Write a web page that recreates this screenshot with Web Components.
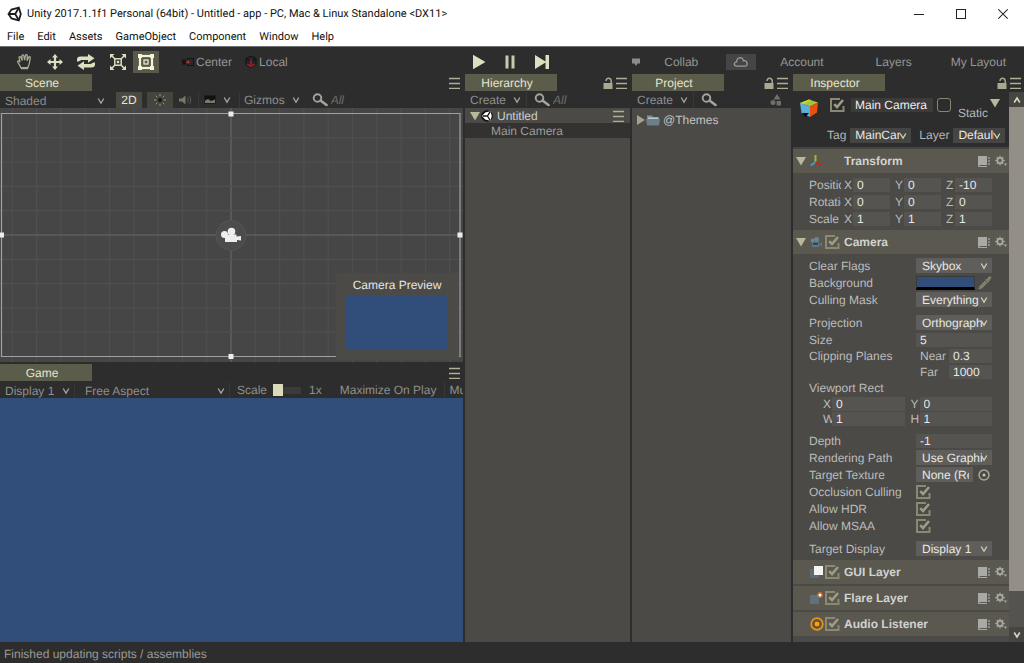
<!DOCTYPE html>
<html lang="en">
<head>
<meta charset="utf-8">
<title>Unity 2017.1.1f1 Personal (64bit) - Untitled - app</title>
<style>
  html, body { height: 100%; margin: 0; }
  body { background: #2d2d2d; font: 12px/14px "Liberation Sans", Arial, sans-serif; color: #b6b6b4; overflow: hidden; text-rendering: geometricPrecision; }
</style>
</head>
<body>
<unity-editor></unity-editor>
<script>
const RESET = `
  * { box-sizing: border-box; }
  button, input, select { font: inherit; color: inherit; margin: 0; padding: 0; border: 0; background: none; border-radius: 0; outline: 0; min-width: 0; text-rendering: inherit; }
  select { appearance: none; }
  input[type=checkbox] { appearance: none; }
  a { color: inherit; text-decoration: none; }
`;

const svg = (w, h, body) => `<svg width="${w}" height="${h}" viewBox="0 0 ${w} ${h}" aria-hidden="true">${body}</svg>`;
const ICONS = {
  unity: svg(16, 16, `<g fill="none" stroke="#1c1c1c" stroke-width="1.8"><path d="M1.5 8 4.5 3.6 11.8 1.6 13.8 8 11.8 14.4 4.5 12.4Z"/><path d="M1.5 8H8.2L11.8 1.8M8.2 8l3.6 6.2"/></g>`),
  unityball: svg(12, 14, `<circle cx="6" cy="7" r="5.8" fill="#111"/><path d="M1 7 4.2 3.4 9.4 2.2 10.8 7 9.4 11.8 4.2 10.6Z" fill="#fff"/><path d="M2 7h4.4l2.8-4.4M6.4 7l2.8 4.4" stroke="#111" stroke-width="1.3" fill="none"/>`),
  min: svg(10, 12, `<path d="M0 6.500H10" stroke="#222"/>`),
  max: svg(10, 12, `<rect x=".5" y="1.500" width="9" height="9" fill="none" stroke="#222"/>`),
  close: svg(10, 12, `<path d="M.3 1.300 9.700 10.700M9.700 1.300.3 10.700" stroke="#222" stroke-width="1.100"/>`),
  hand: svg(18, 18, `<path d="M4.600 14.500C4.300 12.500 2 10.600 1.600 8.600c.6-1 1.600-.6 2.400.6L3 4.800c0-1.300 1.500-1.500 1.900-.3l1.300 3L5.900 3c0-1.400 1.800-1.400 2 0l.7 4.200L9.400 2.600c.2-1.300 1.900-1.100 1.900.2l-.2 4.900 1.500-3.400c.5-1.200 2-.7 1.700.5-.6 2.400-.5 4.100-1.200 6.600-.4 1.300-1 1.800-1.100 3.200Z" fill="none" stroke="#a9a890" stroke-width="1.300"/><path d="M5 15.500h7" stroke="#a9a890" stroke-width="1.500"/>`),
  move: svg(16, 16, `<path d="M8 0l3 3.500H9.100V6.900h3.400V5L16 8l-3.500 3V9.100H9.100v3.400H11L8 16l-3-3.500h1.900V9.100H3.500V11L0 8l3.500-3v1.900h3.400V3.500H5Z" fill="#dedec0"/>`),
  rotate: svg(20, 16, `<path d="M1 7.500V5.500Q1 2.500 4.500 2.500H12V0L18.500 4.300 12 8.700V6H5.500L2.500 7.500ZM19 8.500v2q0 3-3.500 3H8V16L1.500 11.700 8 7.300V10h6.500l3-1.500Z" fill="#dedec0"/>`),
  scale: svg(18, 18, `<g fill="none" stroke="#dedec0" stroke-width="1.500"><rect x="5.800" y="5.800" width="6.400" height="6.400"/><path d="M5.500 5.500 2 2M12.500 5.500 16 2M5.500 12.500 2 16M12.500 12.500 16 16"/></g><path d="M1 1h4.500L1 5.500ZM17 1v4.500L12.500 1ZM1 17v-4.500L5.500 17ZM17 17h-4.500L17 12.500ZM7.800 7.800h2.400v2.400H7.800Z" fill="#dedec0"/>`),
  rect: svg(18, 18, `<rect x="3" y="3" width="12" height="12" fill="none" stroke="#f4f4d6" stroke-width="2.200"/><path d="M1 1h4v4H1ZM13 1h4v4h-4ZM1 13h4v4H1ZM13 13h4v4h-4Z" fill="#f4f4d6"/><rect x="7" y="7" width="4" height="4" fill="none" stroke="#f4f4d6" stroke-width="1.200"/>`),
  pivot: svg(12, 10, `<path d="M0 2.500h4v5H0Z" fill="#161616"/><rect x="5.500" y="1.500" width="6" height="7" fill="#2a2a2a" stroke="#141414"/><circle cx="6" cy="5" r="1.600" fill="#c8252d"/>`),
  local: svg(12, 14, `<path d="M6 1 11 3.500v6L6 12.500 1 9.500v-6ZM1 3.500 6 6l5-2.500" fill="#242424" stroke="#111"/><path d="M6 5v5M2 9l4 2.500L10 9" stroke="#b3222c" stroke-width="1.300" fill="none"/>`),
  play: svg(14, 16, `<path d="M1 0.800 13.500 8 1 15.200Z" fill="#dedec0"/>`),
  pause: svg(12, 14, `<path d="M1.500.5h3v13h-3ZM7.500.5h3v13h-3Z" fill="#c9c9ac"/>`),
  step: svg(16, 16, `<path d="M1 1 11.500 7.500V1H15v14h-3.500V8.500L1 15Z" fill="#dedec0"/>`),
  bubble: svg(8, 8, `<path d="M0 .5h8v5H5.500L4 8 2.500 5.500H0Z" fill="#8c8c8c"/>`),
  cloud: svg(16, 12, `<path d="M3.800 10.200C.6 10.200.4 6 3.700 5.900 3.400 1 9.800.2 10.400 4.800c4-.8 5.300 5.400 1.600 5.400Z" fill="none" stroke="#9a9a98" stroke-width="1.300"/>`),
  menu: svg(11, 12, `<path d="M0 1.500h11M0 6.500h11M0 11.500h11" stroke="#b0af95" stroke-width="1.400"/>`),
  lock: svg(10, 12, `<path d="M3 4C2.800.4 8.200.2 8.200 4V6.500" fill="none" stroke="#a9a890" stroke-width="1.500"/><rect x=".5" y="6" width="9" height="6" fill="#a9a890"/>`),
  chevron: svg(8, 8, `<path d="M1.200 1.500 4 6.200 6.800 1.500" fill="none" stroke="currentColor" stroke-width="1.300"/>`),
  chevup: svg(8, 8, `<path d="M1.200 6.500 4 2 6.800 6.500" fill="none" stroke="#d9d8bd" stroke-width="1.600"/>`),
  chevdown: svg(8, 8, `<path d="M1.200 1.500 4 6 6.800 1.500" fill="none" stroke="#d9d8bd" stroke-width="1.600"/>`),
  sun: svg(12, 12, `<circle cx="6" cy="6" r="1.900" fill="#151515"/><path d="M6 0v2.200M6 9.800V12M0 6h2.200M9.800 6H12M1.800 1.800l1.500 1.500M8.700 8.700l1.500 1.500M1.800 10.200l1.500-1.500M8.700 3.300l1.500-1.500" stroke="#9a9a84" stroke-width="1"/>`),
  sound: svg(14, 12, `<path d="M0 4.500h3L6.500 1.500v9L3 7.500H0Z" fill="#77776c"/><path d="M8.500 3.500q1.500 2.500 0 5M10.500 2q2.500 4 0 8" fill="none" stroke="#555" stroke-width="1.100"/>`),
  image: svg(12, 10, `<rect x=".5" y=".5" width="11" height="8" fill="#111" /><path d="M1 8V5.500L4 4l3 2 4-1.500V8Z" fill="#77776c"/>`),
  search: svg(16, 14, `<circle cx="5.500" cy="5" r="3.800" fill="none" stroke="#a5a59c" stroke-width="1.900"/><path d="M8.500 7.500 14.500 12" stroke="#a5a59c" stroke-width="2.600" stroke-linecap="round"/>`),
  filter: svg(12, 12, `<path d="M7 0l3.500 5.500h-7Z" fill="#6e6e6c"/><circle cx="3" cy="8.500" r="2.500" fill="#6e6e6c"/><path d="M6.500 7H11v4.500H6.500Z" fill="#6e6e6c"/>`),
  down: svg(10, 10, `<path d="M0 1h10L5 9.500Z" fill="#b9b89a"/>`),
  right: svg(8, 10, `<path d="M0 0 8 5 0 10Z" fill="#a3a28a"/>`),
  folder: svg(14, 12, `<path d="M1 1.500h5l1 1.500h6v8H1Z" fill="#7b8f96"/><path d="M2 3.500h10v2H2Z" fill="#b9c6ca"/><path d="M0 5h14l-1 6.500H1Z" fill="#6a7f87"/>`),
  cube: svg(20, 20, `<path d="M1 5 10 1.500 19 4.500 11 8.500Z" fill="#a5c63a"/><path d="M1 5l10 3.500V19L2.500 15Z" fill="#5ab0dc"/><path d="M11 8.500 19 4.500 18 14.500 11 19Z" fill="#e8500f"/><path d="M1 5 10 1.500 12 2 5 6.500Z" fill="#c6d03c"/><path d="M3 15h7l-3.500 4Z" fill="#0b0b0b"/>`),
  axes: svg(12, 14, `<path d="M5.500 1v7" stroke="#9bbf16" stroke-width="2"/><path d="M5.500 8 .8 11.500" stroke="#3f9ccb" stroke-width="2"/><path d="M5.500 8 11 11.500" stroke="#d21f16" stroke-width="2"/>`),
  camera: svg(12, 12, `<circle cx="2.500" cy="4.500" r="2" fill="#6b8593"/><circle cx="6.500" cy="3.500" r="2.500" fill="#6b8593"/><path d="M2 6h7v5H2ZM9.500 7.500 12 6.500v4L9.500 9.500Z" fill="#5d7685"/><path d="M3 7h5v1.500H3Z" fill="#26343b"/>`),
  gui: svg(14, 14, `<rect x="0" y="4" width="9" height="9" fill="#5b6c76"/><rect x="4" y="1" width="9" height="9" fill="#f4f4f1"/>`),
  flare: svg(14, 14, `<rect x="0" y="4" width="9" height="9" fill="#5f717a"/><circle cx="10" cy="4" r="2.200" fill="#fff" stroke="#bf6a31" stroke-width="1.400"/>`),
  audio: svg(14, 14, `<circle cx="7" cy="7" r="5.800" fill="none" stroke="#ea9512" stroke-width="1.700"/><circle cx="7" cy="7" r="3" fill="#f5a01a" stroke="#7a4b07"/>`),
  book: svg(12, 12, `<path d="M0 1h9v9H1.500v1H9v1H1Q0 12 0 11Z" fill="#a9a9a5"/><path d="M10 2h2v2h-2ZM10 5h2v2h-2ZM10 8h2v2h-2Z" fill="#8a8a86"/>`),
  gear: svg(12, 12, `<circle cx="5" cy="5.500" r="2.600" fill="none" stroke="#a9a9a5" stroke-width="1.600"/><path d="M5 .8v2M5 8.200v2M.3 5.500h2M7.700 5.500h2M1.700 2.200l1.400 1.400M6.900 7.400l1.400 1.400M1.700 8.800l1.400-1.400M6.900 3.600l1.400-1.400" stroke="#a9a9a5" stroke-width="1.400"/><path d="M9 8.500h3L10.500 11Z" fill="#a9a9a5"/>`),
  dropper: svg(14, 14, `<path d="M1 13l1-3 5-5 2 2-5 5ZM7 3.500l3.500 3.500M8 4l3-3q2-1 2 1L10 6Z" fill="#7f7e6c" stroke="#7f7e6c"/>`),
  target: svg(12, 12, `<circle cx="6" cy="6" r="5" fill="none" stroke="#a9a890" stroke-width="1.500"/><circle cx="6" cy="6" r="1.500" fill="#c9c8ac"/>`),
  tick: svg(15, 14, `<path d="M10 1H1V13H13.500V8" fill="none" stroke="#8a8973" stroke-width="2"/><path d="M4.200 6.200 7 9 13 2" fill="none" stroke="#9d9c84" stroke-width="2.600"/>`),
};

/* Registers an element whose shadow root is filled from render(attributes). */
function element(name, styles, render) {
  customElements.define(name, class extends HTMLElement {
    connectedCallback() {
      if (this.shadowRoot) return;
      const t = document.createElement('template');
      t.innerHTML = `<style>${RESET}${styles}</style>` + render(a => this.getAttribute(a) ?? '', this);
      this.attachShadow({ mode: 'open' }).append(t.content.cloneNode(true));
    }
  });
}

element('u-icon', `:host { display: inline-flex; flex: none; } svg { display: block; }`, a => ICONS[a('name')]);

element('u-select', `
  :host { display: flex; position: relative; height: 15px; min-width: 0; background: var(--box, #5f5e5a); color: #e8e8e6; }
  select { width: 100%; height: 100%; padding: var(--drop, 1px) var(--clip, 9px) 0 var(--inset, 6px); line-height: 14px; }
  u-icon { position: absolute; right: var(--arrow, 4px); top: 4px; pointer-events: none; color: var(--chevron, #cfceb2); }`,
  a => `<select aria-label="${a('label')}"><option>${a('value')}</option></select><u-icon name="chevron"></u-icon>`);

element('u-check', `
  :host { display: inline-flex; position: relative; flex: none; width: 15px; height: 14px; }
  input { width: 15px; height: 14px; }
  input.off { width: 14px; border: 1px solid #85846f; border-radius: 3px; }
  u-icon { position: absolute; left: 0; top: 0; pointer-events: none; }`,
  a => a('state') === 'off' ? `<input type="checkbox" class="off" aria-label="${a('label')}">`
    : `<input type="checkbox" checked aria-label="${a('label')}"><u-icon name="tick"></u-icon>`);

element('u-titlebar', `
  :host { display: flex; align-items: center; height: 27px; flex: none; padding: 0 16px 0 7px; background: #fff; color: #111; font: 11px/16px Roboto, sans-serif; }
  h1 { font: inherit; margin: 0; padding-left: 4px; flex: 1; white-space: nowrap; overflow: hidden; }
  nav { display: flex; gap: 32px; }
  button { display: flex; }`,
  () => `<u-icon name="unity"></u-icon><h1>Unity 2017.1.1f1 Personal (64bit) - Untitled - app - PC, Mac &amp; Linux Standalone &lt;DX11&gt;</h1>
  <nav><button aria-label="Minimize"><u-icon name="min"></u-icon></button><button aria-label="Maximize"><u-icon name="max"></u-icon></button><button aria-label="Close"><u-icon name="close"></u-icon></button></nav>`);

element('u-menubar', `
  :host { display: flex; align-items: center; gap: 13px; height: 19px; flex: none; padding: 0 7px; background: #fff; color: #111; font: 11px/16px Roboto, sans-serif; }`,
  () => ['File', 'Edit', 'Assets', 'GameObject', 'Component', 'Window', 'Help'].map(t => `<a href="#">${t}</a>`).join(''));

element('u-toolbar', `
  :host { display: grid; grid-template-columns: 1fr auto 1fr; align-items: center; height: 28px; flex: none; padding: 2px 18px 0 16px; border-top: 1px solid #6f6f6f; color: #969694; }
  div { display: flex; align-items: center; }
  button { display: flex; align-items: center; white-space: nowrap; }
  .tools { gap: 13px; }
  .rect { background: #5a594b; padding: 2px 4px; margin-left: -7px; }
  .pivot { gap: 2px; margin-left: 10px; }
  .local { gap: 2px; }
  .play { gap: 18px; }
  .right { justify-content: flex-end; }
  .cloud { background: #454545; padding: 2px 7px; height: 16px; margin: 0 24px 0 28px; }
  .bubble { margin-right: 24px; }
  .account { margin-right: 52px; }
  .layers { margin-right: 39px; }`,
  () => `<div class="tools">
    <button aria-label="Hand"><u-icon name="hand"></u-icon></button><button aria-label="Move"><u-icon name="move"></u-icon></button>
    <button aria-label="Rotate"><u-icon name="rotate"></u-icon></button><button aria-label="Scale"><u-icon name="scale"></u-icon></button>
    <button class="rect" aria-label="Rect"><u-icon name="rect"></u-icon></button>
    <button class="pivot"><u-icon name="pivot"></u-icon>Center</button><button class="local"><u-icon name="local"></u-icon>Local</button></div>
  <div class="play"><button aria-label="Play"><u-icon name="play"></u-icon></button><button aria-label="Pause"><u-icon name="pause"></u-icon></button><button aria-label="Step"><u-icon name="step"></u-icon></button></div>
  <div class="right"><u-icon class="bubble" name="bubble"></u-icon><button>Collab</button><button class="cloud" aria-label="Cloud"><u-icon name="cloud"></u-icon></button>
    <button class="account">Account</button><button class="layers">Layers</button><button>My Layout</button></div>`);

element('u-panel', `
  :host { display: flex; flex-direction: column; min-height: 0; min-width: 0; }
  header { display: flex; align-items: center; justify-content: space-between; height: 18px; flex: none; padding-right: 3px; }
  .tab { width: 92px; height: 17px; align-self: flex-start; padding-right: 8px; background: #5c5c4b; color: #e6e5cb; }
  .ends { display: flex; gap: 3px; align-items: center; }
  .ends button { display: flex; }
  .bar { display: flex; align-items: center; height: 16px; flex: none; overflow: hidden; color: #8f8f8d; }
  .body { flex: 1; min-height: 0; background: #4b4a47; display: flex; flex-direction: column; }`,
  (a, el) => `<header><button class="tab">${a('label')}</button><span class="ends">
    ${el.hasAttribute('lock') ? '<button aria-label="Lock"><u-icon name="lock"></u-icon></button>' : ''}
    <button aria-label="Panel menu"><u-icon name="menu"></u-icon></button></span></header>
    ${el.hasAttribute('nobar') ? '' : '<div class="bar"><slot name="bar"></slot></div>'}<div class="body"><slot></slot></div>`);

const BAR = `
  :host { display: flex; flex: 1; align-items: center; height: 16px; min-width: 0; white-space: nowrap; color: #8f8f8d; }
  button, label, span { flex: none; }
  button { display: flex; align-items: center; white-space: nowrap; height: 16px; }
  i { align-self: stretch; flex: none; width: 1px; background: #383838; }
  u-select { --box: none; --drop: 1px; --chevron: #a5a59c; color: #8f8f8d; --inset: 5px; flex: none; }
  u-icon { color: #a5a59c; }
  input[type=search] { appearance: none; flex: 1; width: 0; height: 16px; padding-left: 3px; }
  input::placeholder { color: #6d6d6b; font-style: italic; opacity: 1; }`;

element('scene-bar', BAR + `
  .shade { width: 109px; }
  .two { width: 26px; justify-content: center; background: #4a4a42; color: #e4e4dc; margin: 0 5px 0 7px; }
  .sun { width: 26px; justify-content: center; background: #454540; }
  .snd { width: 25px; justify-content: center; }
  .img { gap: 7px; margin: 0 8px 0 5px; }
  .giz { gap: 7px; margin: 0 12px 0 4px; }`,
  () => `<u-select class="shade" label="Draw mode" value="Shaded"></u-select>
  <button class="two">2D</button><button class="sun" aria-label="Lighting"><u-icon name="sun"></u-icon></button>
  <button class="snd" aria-label="Audio"><u-icon name="sound"></u-icon></button><i></i>
  <button class="img" aria-label="Effects"><u-icon name="image"></u-icon><u-icon name="chevron"></u-icon></button><i></i>
  <button class="giz">Gizmos<u-icon name="chevron"></u-icon></button><u-icon name="search"></u-icon><input type="search" aria-label="Search scene" placeholder="All">`);

element('game-bar', BAR + `
  .disp { width: 74px; }
  .aspect { width: 154px; --inset: 10px; }
  label { display: flex; align-items: center; gap: 6px; padding: 0 8px 0 7px; }
  input[type=range] { appearance: none; width: 28px; height: 12px; }
  input[type=range]::-webkit-slider-runnable-track { height: 12px; background: linear-gradient(#2d2d2d 3px, #3b3b3b 3px, #3b3b3b 10px, #2d2d2d 10px); }
  input[type=range]::-webkit-slider-thumb { appearance: none; width: 10px; height: 12px; background: #dcdbb9; }
  .max { margin: 0 8px 0 18px; }
  .mute { padding-left: 4px; }`,
  () => `<u-select class="disp" label="Display" value="Display 1"></u-select><i></i><u-select class="aspect" label="Aspect" value="Free Aspect"></u-select><i></i>
  <label>Scale<input type="range" min="1" max="5" value="1"></label><span>1x</span><button class="max">Maximize On Play</button><i></i><button class="mute">Mute Audio</button>`);

element('list-bar', BAR + `
  .create { gap: 7px; padding: 0 5px; }
  .find { padding: 0 0 0 7px; display: flex; flex: 1; min-width: 0; align-items: center; }
  .filter { margin-right: 9px; }`,
  (a, el) => `<button class="create">Create<u-icon name="chevron"></u-icon></button><i></i>
  <label class="find"><u-icon name="search"></u-icon><input type="search" aria-label="Search" placeholder="${a('hint')}"></label>
  ${el.hasAttribute('filter') ? '<u-icon class="filter" name="filter"></u-icon>' : ''}`);

const gridLines = (() => {
  let out = '';
  for (let k = -9; k <= 9; k++) { const x = 231 + k * 24.3; out += `<path d="M${x.toFixed(1)} 0V254" stroke="${k ? '#4f4f4f' : '#585858'}" stroke-width="${k ? 1.2 : 2}"/>`; }
  for (let k = -5; k <= 5; k++) { const y = 127 + k * 24.3; out += `<path d="M0 ${y.toFixed(1)}H463" stroke="${k ? '#4f4f4f' : '#585858'}" stroke-width="${k ? 1.2 : 2}"/>`; }
  return out;
})();
element('scene-view', `
  :host { display: block; position: relative; flex: 1; min-height: 0; background: #464646; }
  svg { display: block; width: 100%; height: 100%; }
  figure { position: absolute; right: 4px; bottom: 2px; width: 123px; height: 87px; margin: 0; padding: 5px 11px 10px 10px; background: #4b4a47; display: flex; flex-direction: column; gap: 3px; }
  figcaption { text-align: center; color: #e6e6e4; white-space: nowrap; }
  .shot { flex: 1; background: #314d79; }`,
  () => `<svg viewBox="0 0 463 254" preserveAspectRatio="none">${gridLines}
    <path d="M1.500 5.500H460V248.500H1.500Z" fill="none" stroke="#a0a0a0" stroke-width="1.200"/>
    <circle cx="231" cy="127.500" r="15" fill="#4c4c4c" stroke="#545454"/>
    <g fill="#ededed"><circle cx="224.500" cy="126.500" r="3.500"/><circle cx="231.500" cy="123.500" r="3.800"/><path d="M223.500 126.500h13v2l4.500-.5v4.500l-4-.5v2H225v-4Z"/>
    <path d="M228.500 3.500h5v5h-5ZM228.500 246h5v5h-5ZM457.500 124.500h5v5h-5ZM0 124.500h4v5H0Z"/></g></svg>
    <figure><figcaption>Camera Preview</figcaption><div class="shot"></div></figure>`);

element('game-view', `:host { display: block; flex: 1; background: #314d79; }`, () => '');

element('tree-row', `
  :host { display: flex; align-items: center; height: 15px; flex: none; padding: 0 6px 0 5px; background: var(--row, none); color: var(--ink, #cfcfcd); }
  :host([child]) { padding-left: 26px; }
  span { flex: 1; }`,
  (a, el) => `${el.hasAttribute('child') ? '' : `<slot name="icon"></slot>`}<span><slot></slot></span><slot name="end"></slot>`);

element('component-box', `
  :host { display: block; flex: none; }
  header { display: flex; align-items: center; height: 24px; background: #5a584f; padding: 0 2px 0 3px; font-weight: bold; color: #d2d2d0; }
  h2 { font: inherit; margin: 0; flex: 1; padding-left: 5px; }
  button { display: flex; }
  .fold { width: 10px; height: 10px; margin-right: 4px; }
  .pic { width: 14px; display: flex; margin-right: 1px; }
  .en { width: 14px; display: flex; }
  .end { display: flex; gap: 5px; }
  .body { display: flex; flex-direction: column; padding: 3px 17px 3px 16px; }
  :host([closed]) .body { display: none; }
  :host([closed]) { margin-bottom: 2px; }`,
  (a, el) => `<header><button class="fold" aria-label="Fold">${el.hasAttribute('closed') ? '' : '<u-icon name="down"></u-icon>'}</button>
  <span class="pic"><u-icon name="${a('icon')}"></u-icon></span><span class="en">${el.hasAttribute('toggle') ? `<u-check label="${a('name')} enabled"></u-check>` : ''}</span>
  <h2>${a('name')}</h2><span class="end"><button aria-label="Help"><u-icon name="book"></u-icon></button><button aria-label="Settings"><u-icon name="gear"></u-icon></button></span></header>
  <div class="body"><slot></slot></div>`);

/* One labelled inspector property; kind picks the control. */
element('prop-row', `
  :host { display: grid; grid-template-columns: 107px minmax(0, 1fr); align-items: center; height: 17px; color: #bcbcba; white-space: nowrap; }
  :host([kind=xyz]) { grid-template-columns: 32px minmax(0, 1fr); column-gap: 3px; }
  :host([kind=pair]) { grid-template-columns: minmax(0, 1fr); padding-left: 14px; height: 15px; }
  :host([kind=sub]) { height: 16px; }
  :host([kind=sub][last]) { height: 15px; }
  :host([space]) { margin-top: 6px; }
  .name { overflow: hidden; }
  .f { height: 14px; width: 100%; background: #555451; padding-left: 4px; color: #e8e8e6; }
  .xyz { display: grid; grid-template-columns: repeat(3, minmax(0, 1fr)); gap: 5px; }
  .xyz label, .pair label { display: grid; grid-template-columns: 9px minmax(0, 1fr); align-items: center; overflow: hidden; }
  .pair label span { overflow: hidden; }
  .pair { display: grid; grid-template-columns: repeat(2, minmax(0, 1fr)); gap: 6px; }
  .sub { display: grid; grid-template-columns: 29px minmax(0, 1fr); padding-left: 4px; align-items: center; }
  .swap { display: flex; gap: 3px; align-items: center; }
  .swap button { display: flex; }
  input[type=color] { appearance: none; flex: 1; height: 14px; border: 1px solid #3a3a38; border-bottom: 3px solid #000; }
  input[type=color]::-webkit-color-swatch-wrapper { padding: 0; }
  input[type=color]::-webkit-color-swatch { border: 0; border-radius: 0; }
  .obj { flex: 1; width: 0; height: 15px; background: #5f5e5a; padding: 0 4px 0 6px; }
  .swap.tex { gap: 5px; }
  .swap.tex u-icon { margin-right: 2px; }`,
  a => {
    const n = a('label'), v = a('value'), lab = `<label class="name" for="c">${n}</label>`, f = (x, id = '') => `<input class="f" ${id} value="${x}">`;
    const many = (cls) => { const names = a('parts').split(' '); return `<div class="${cls}">` + v.split(' ').map((x, i) => `<label><span>${names[i]}</span>${f(x)}</label>`).join('') + '</div>'; };
    switch (a('kind')) {
      case 'xyz': return `<span class="name">${n}</span>` + many('xyz');
      case 'pair': return many('pair');
      case 'sub': return `<span class="name">${n}</span><label class="sub"><span>${a('parts')}</span>${f(v)}</label>`;
      case 'title': return `<span class="name">${n}</span>`;
      case 'select': return `<span class="name">${n}</span><u-select label="${n}" value="${v}"></u-select>`;
      case 'check': return `<span class="name">${n}</span><u-check label="${n}"></u-check>`;
      case 'color': return `${lab}<div class="swap"><input type="color" id="c" value="${v}"><button aria-label="Pick colour"><u-icon name="dropper"></u-icon></button></div>`;
      case 'object': return `${lab}<div class="swap tex"><input class="f obj" id="c" value="${v}"><button aria-label="Choose"><u-icon name="target"></u-icon></button></div>`;
      default: return lab + f(v, 'id="c"');
    }
  });

element('object-head', `
  :host { display: block; flex: none; background: #2d2d2d; padding: 6px 4px 4px 6px; border-bottom: 2px solid #454441; color: #b6b6b4; }
  div { display: flex; }
  .one { height: 22px; align-items: flex-start; }
  .one u-check { margin: 0 6px 0 11px; }
  .name { flex: 1; width: 0; height: 14px; background: #3b3b3a; padding-left: 4px; color: #eee; }
  .one .static { margin: 0 6px 0 4px; }
  .lbl { align-self: flex-end; margin-right: 2px; }
  .one button { display: flex; }
  .one .tri { margin-right: 5px; }
  .two { margin-top: 7px; align-items: center; height: 16px; padding-left: 28px; }
  .two u-select { --box: #454543; --drop: 0; --inset: 5px; --clip: 11px; }
  .two .tag { width: 61px; margin: 0 8px 0 4px; }
  .two .layer { flex: 1; margin-left: 4px; }`,
  () => `<div class="one"><u-icon name="cube"></u-icon><u-check label="Active"></u-check><input class="name" aria-label="Name" value="Main Camera">
  <u-check class="static" state="off" label="Static"></u-check><span class="lbl">Static</span><button class="tri" aria-label="Static options"><u-icon name="down"></u-icon></button></div>
  <div class="two"><span>Tag</span><u-select class="tag" label="Tag" value="MainCamera"></u-select><span>Layer</span><u-select class="layer" label="Layer" value="Default"></u-select></div>`);

element('u-scroll', `
  :host { display: flex; flex: 1; min-height: 0; }
  .view { flex: 1; min-width: 0; overflow: hidden; display: flex; flex-direction: column; }
  .rail { width: 15px; flex: none; display: flex; flex-direction: column; background: #55534f; }
  button { height: 15px; display: flex; align-items: center; justify-content: center; background: #454542; }
  .thumb { flex: 93; background: #938f86; }
  .rest { flex: 7; }`,
  () => `<div class="view"><slot></slot></div><div class="rail"><button aria-label="Scroll up"><u-icon name="chevup"></u-icon></button><div class="thumb"></div><div class="rest"></div><button aria-label="Scroll down"><u-icon name="chevdown"></u-icon></button></div>`);

element('unity-editor', `
  :host { display: flex; flex-direction: column; height: 100vh; }
  main { flex: 1; min-height: 0; display: grid; grid-template-columns: minmax(0, 463fr) minmax(0, 165fr) minmax(0, 159fr) minmax(0, 231fr); gap: 2px; }
  .left { display: flex; flex-direction: column; gap: 2px; min-height: 0; }
  .left u-panel:first-child { flex: 288 1 0; }
  .left u-panel:last-child { flex: 278 1 0; }
  .scene { --ink: #cfcfcd; }
  .scene u-icon[slot=icon] + u-icon[slot=icon] { margin: 0 4px 0 1px; }
  .cam { --row: #333231; --ink: #9c9c9a; }
  .themes { --ink: #c2c2c0; margin-top: 4px; }
  .themes u-icon + u-icon { margin: 0 3px 0 1px; }
  footer { height: 21px; flex: none; padding: 5px 4px 0; color: #9a9a98; }`,
  () => `<u-titlebar></u-titlebar><u-menubar></u-menubar><u-toolbar></u-toolbar>
  <main>
    <div class="left">
      <u-panel label="Scene"><scene-bar slot="bar"></scene-bar><scene-view></scene-view></u-panel>
      <u-panel label="Game"><game-bar slot="bar"></game-bar><game-view></game-view></u-panel>
    </div>
    <u-panel label="Hierarchy" lock><list-bar slot="bar" hint="All"></list-bar>
      <tree-row class="scene"><u-icon slot="icon" name="down"></u-icon><u-icon slot="icon" name="unityball"></u-icon>Untitled<u-icon slot="end" name="menu"></u-icon></tree-row>
      <tree-row class="cam" child>Main Camera</tree-row>
    </u-panel>
    <u-panel label="Project" lock><list-bar slot="bar" filter></list-bar>
      <tree-row class="themes"><u-icon slot="icon" name="right"></u-icon><u-icon slot="icon" name="folder"></u-icon>@Themes</tree-row>
    </u-panel>
    <u-panel label="Inspector" lock nobar><u-scroll>
      <object-head></object-head>
      <component-box name="Transform" icon="axes">
        <prop-row kind="xyz" label="Position" parts="X Y Z" value="0 0 -10"></prop-row>
        <prop-row kind="xyz" label="Rotation" parts="X Y Z" value="0 0 0"></prop-row>
        <prop-row kind="xyz" label="Scale" parts="X Y Z" value="1 1 1"></prop-row>
      </component-box>
      <component-box name="Camera" icon="camera" toggle>
        <prop-row kind="select" label="Clear Flags" value="Skybox"></prop-row>
        <prop-row kind="color" label="Background" value="#314d79"></prop-row>
        <prop-row kind="select" label="Culling Mask" value="Everything"></prop-row>
        <prop-row space kind="select" label="Projection" value="Orthographic"></prop-row>
        <prop-row label="Size" value="5"></prop-row>
        <prop-row kind="sub" label="Clipping Planes" parts="Near" value="0.3"></prop-row>
        <prop-row kind="sub" last parts="Far" value="1000"></prop-row>
        <prop-row kind="title" label="Viewport Rect"></prop-row>
        <prop-row kind="pair" parts="X Y" value="0 0"></prop-row>
        <prop-row kind="pair" parts="W H" value="1 1"></prop-row>
        <prop-row space label="Depth" value="-1"></prop-row>
        <prop-row kind="select" label="Rendering Path" value="Use Graphics Settings"></prop-row>
        <prop-row kind="object" label="Target Texture" value="None (Render Texture)"></prop-row>
        <prop-row kind="check" label="Occlusion Culling"></prop-row>
        <prop-row kind="check" label="Allow HDR"></prop-row>
        <prop-row kind="check" label="Allow MSAA"></prop-row>
        <prop-row space kind="select" label="Target Display" value="Display 1"></prop-row>
      </component-box>
      <component-box closed toggle name="GUI Layer" icon="gui"></component-box>
      <component-box closed toggle name="Flare Layer" icon="flare"></component-box>
      <component-box closed toggle name="Audio Listener" icon="audio"></component-box>
    </u-scroll></u-panel>
  </main>
  <footer>Finished updating scripts / assemblies</footer>`);
</script>
</body>
</html>
